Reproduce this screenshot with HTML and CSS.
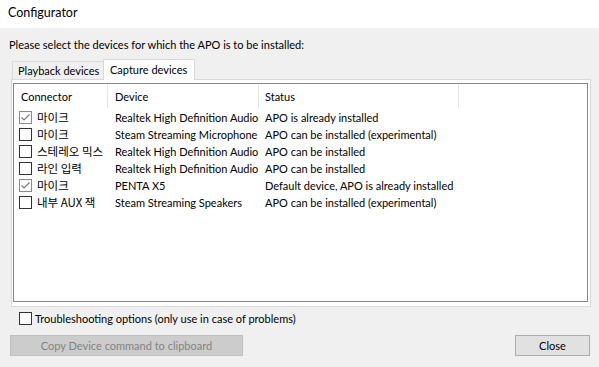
FILE: index.html
```html
<!DOCTYPE html>
<html lang="en">

<head>
    <meta charset="utf-8">
    <title>Configurator</title>
    <link rel="stylesheet" href="styles.css">
</head>

<body>
    <div class="titlebar">Configurator</div>

    <div class="dialog">
        <p class="prompt">Please select the devices for which the APO is to be installed:</p>

        <div class="tabs">
            <div class="tab">Playback devices</div>
            <div class="tab active">Capture devices</div>
        </div>

        <div class="panel">
            <div class="list">
                <div class="row head">
                    <div class="cell">Connector</div>
                    <div class="cell">Device</div>
                    <div class="cell">Status</div>
                </div>

                <div class="row">
                    <div class="cell conn"><span class="box checked"><svg viewBox="0 0 11 11"><polyline points="1.5,5.5 4,8 9.5,2.5"/></svg></span>마이크</div>
                    <div class="cell">Realtek High Definition Audio</div>
                    <div class="cell">APO is already installed</div>
                </div>
                <div class="row">
                    <div class="cell conn"><span class="box"></span>마이크</div>
                    <div class="cell">Steam Streaming Microphone</div>
                    <div class="cell">APO can be installed (experimental)</div>
                </div>
                <div class="row">
                    <div class="cell conn"><span class="box"></span>스테레오 믹스</div>
                    <div class="cell">Realtek High Definition Audio</div>
                    <div class="cell">APO can be installed</div>
                </div>
                <div class="row">
                    <div class="cell conn"><span class="box"></span>라인 입력</div>
                    <div class="cell">Realtek High Definition Audio</div>
                    <div class="cell">APO can be installed</div>
                </div>
                <div class="row">
                    <div class="cell conn"><span class="box checked"><svg viewBox="0 0 11 11"><polyline points="1.5,5.5 4,8 9.5,2.5"/></svg></span>마이크</div>
                    <div class="cell">PENTA X5</div>
                    <div class="cell">Default device, APO is already installed</div>
                </div>
                <div class="row">
                    <div class="cell conn"><span class="box"></span>내부 AUX 잭</div>
                    <div class="cell">Steam Streaming Speakers</div>
                    <div class="cell">APO can be installed (experimental)</div>
                </div>
            </div>
        </div>

        <label class="trouble"><span class="box dark"></span>Troubleshooting options (only use in case of problems)</label>

        <div class="buttons">
            <button class="btn copy" disabled>Copy Device command to clipboard</button>
            <button class="btn close">Close</button>
        </div>
    </div>
</body>

</html>
```

FILE: styles.css
```css
body {
    margin: 0;
    background-color: #f0f0f0;
    font-family: Lato, "Noto Sans CJK KR", sans-serif;
    font-size: 11px;
    color: #000;
}

.titlebar {
    height: 28px;
    line-height: 26px;
    padding-left: 8px;
    background-color: #fff;
    font-size: 12.5px;
}

.dialog {
    padding: 0 8px 0 10px;
}

.prompt {
    margin: 9px 0 6px -1px;
    line-height: 16px;
    white-space: nowrap;
}

/* tabs */
.tabs {
    display: flex;
    align-items: flex-end;
    height: 20px;
    margin-left: 2px;
    white-space: nowrap;
}

.tab {
    height: 17px;
    line-height: 18px;
    padding: 0 0 0 5px;
    width: 85px;
    border: 1px solid #d9d9d9;
    border-bottom: none;
    background-color: #f0f0f0;
}

.tab.active {
    position: relative;
    height: 20px;
    line-height: 19px;
    width: 84px;
    margin-left: -1px;
    margin-bottom: -1px;
    padding: 0 0 0 6px;
    background-color: #fff;
    z-index: 1;
}

.panel {
    margin-left: 1px;
    height: 220px;
    padding: 3px 2px 3px 1px;
    border: 1px solid #d9d9d9;
    background-color: #fff;
}

.list {
    height: 217px;
    border: 1px solid #828790;
}

.row {
    display: grid;
    grid-template-columns: 94px 151px 200px;
    height: 17px;
    line-height: 17px;
    white-space: nowrap;
}

.row .cell {
    padding-left: 7px;
}

.row .cell:nth-child(3) {
    padding-left: 6px;
}

.row.head {
    height: 25px;
    line-height: 25px;
}

.row.head .cell {
    border-right: 1px solid #e5e5e5;
    height: 23px;
    line-height: 23px;
    margin-top: 1px;
}

.cell.conn {
    display: flex;
    align-items: center;
    padding-left: 5px;
    font-family: "Noto Sans CJK KR", sans-serif;
    font-size: 11.5px;
}

.box {
    display: inline-block;
    box-sizing: border-box;
    flex: none;
    width: 13px;
    height: 13px;
    margin-right: 5px;
    border: 1px solid #333;
    background-color: #fff;
}

.box.checked {
    border-color: #8c8c8c;
}

.box svg {
    display: block;
    width: 11px;
    height: 11px;
    fill: none;
    stroke: #7a7a7a;
    stroke-width: 1.2;
}

.trouble {
    display: flex;
    align-items: center;
    height: 13px;
    margin: 5px 0 0 9px;
}

.trouble .box {
    margin-right: 3px;
}

.buttons {
    display: flex;
    justify-content: space-between;
    margin-top: 10px;
    padding-right: 1px;
}

.btn {
    height: 21px;
    box-sizing: border-box;
    font-family: Lato, sans-serif;
    font-size: 11px;
    padding: 0;
}

.btn.copy {
    width: 233px;
    background-color: #cccccc;
    border: 1px solid #bfbfbf;
    color: #838383;
}

.btn.close {
    width: 75px;
    background-color: #e1e1e1;
    border: 1px solid #adadad;
    color: #000;
}
```
